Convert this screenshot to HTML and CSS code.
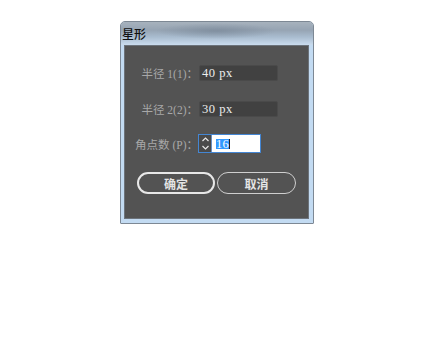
FILE: index.html
```html
<!DOCTYPE html>
<html lang="zh">
<head>
<meta charset="utf-8">
<title>星形</title>
<link rel="stylesheet" href="styles.css">
</head>
<body>
<div class="stage">
  <div class="window">
    <div class="titlebar"><span class="title">星形</span></div>
    <div class="panel">
      <div class="row row1">
        <label class="label">半径 1(1)：</label>
        <div class="field">40 px</div>
      </div>
      <div class="row row2">
        <label class="label">半径 2(2)：</label>
        <div class="field">30 px</div>
      </div>
      <div class="row row3">
        <label class="label">角点数 (P)：</label>
        <div class="combo">
          <div class="spin">
            <svg width="11" height="17" viewBox="0 0 11 17"><path d="M2.5 6 L5.5 3 L8.5 6 M2.5 11 L5.5 14 L8.5 11" fill="none" stroke="#e8e8e8" stroke-width="1.2"/></svg>
          </div>
          <div class="num"><span class="sel">16</span></div>
        </div>
      </div>
      <div class="buttons">
        <div class="btn btn-ok">确定</div>
        <div class="btn btn-cancel">取消</div>
      </div>
    </div>
  </div>
</div>
</body>
</html>
```
FILE: styles.css
```css
html, body {
  margin: 0;
  padding: 0;
  background: #ffffff;
}
.stage {
  padding: 21px 0 0 120px;
}
.window {
  width: 194px;
  height: 203px;
  box-sizing: border-box;
  border: 1px solid #7d8894;
  border-radius: 5px 5px 1px 1px;
  background: #c3dbf2;
  display: flex;
  flex-direction: column;
}
.titlebar {
  height: 23px;
  flex: none;
  display: flex;
  align-items: center;
  padding-left: 1px;
  border-radius: 4px 4px 0 0;
  background:
    radial-gradient(ellipse 60px 8px at 95px 9px, rgba(110,125,142,0.55), rgba(110,125,142,0) 100%),
    linear-gradient(to bottom, #a7b2bd 0%, #96a4b3 35%, #a9bccf 65%, #cadcee 100%);
}
.title {
  font-family: "Noto Sans CJK SC", sans-serif;
  font-size: 12px;
  font-weight: 500;
  color: #111;
  line-height: 14px;
}
.panel {
  flex: none;
  margin: 0 4px 0 3px;
  height: 174px;
  box-sizing: border-box;
  border: 1px solid #6c737b;
  background: #535353;
  display: flex;
  flex-direction: column;
  font-family: "Liberation Serif", "Noto Sans CJK SC", serif;
}
.row {
  display: flex;
  align-items: center;
}
.row1 { margin-top: 19px; }
.row2 { margin-top: 20px; }
.row3 { margin-top: 17px; }
.label {
  width: 73px;
  flex: none;
  text-align: right;
  font-size: 11.5px;
  color: #a8a8a8;
  white-space: nowrap;
}
.field {
  margin-left: 1px;
  width: 79px;
  height: 16px;
  box-sizing: border-box;
  background: #414141;
  border: 1px solid #4a4a4a;
  border-radius: 2px;
  color: #ededed;
  font-size: 12.5px;
  letter-spacing: 0.5px;
  line-height: 14px;
  padding-left: 2px;
}
.combo {
  width: 63px;
  height: 19px;
  box-sizing: border-box;
  border: 1px solid #4486d3;
  display: flex;
}
.spin {
  width: 13px;
  flex: none;
  background: #4a4a4a;
  border-right: 1px solid #6a8fbf;
  box-sizing: border-box;
  display: flex;
  align-items: center;
  justify-content: center;
}
.spin svg { display: block; }
.num {
  flex: 1;
  background: #ffffff;
  padding-left: 4px;
  display: flex;
  align-items: center;
}
.sel {
  background: #3399ff;
  color: #ffffff;
  font-size: 12.5px;
  letter-spacing: 0.3px;
  line-height: 10px;
  padding: 0;
  border-right: 1px solid #222;
}
.buttons {
  margin-top: 19px;
  margin-left: 12px;
  display: flex;
  gap: 2px;
}
.btn {
  height: 22px;
  box-sizing: border-box;
  border-radius: 11px;
  display: flex;
  align-items: center;
  justify-content: center;
  font-family: "Noto Sans CJK SC", sans-serif;
  font-size: 12px;
  font-weight: 600;
  color: #e4e4e4;
}
.btn-ok {
  width: 78px;
  border: 2px solid #e8e8e8;
}
.btn-cancel {
  width: 79px;
  border: 1.5px solid #cfcfcf;
}
```
